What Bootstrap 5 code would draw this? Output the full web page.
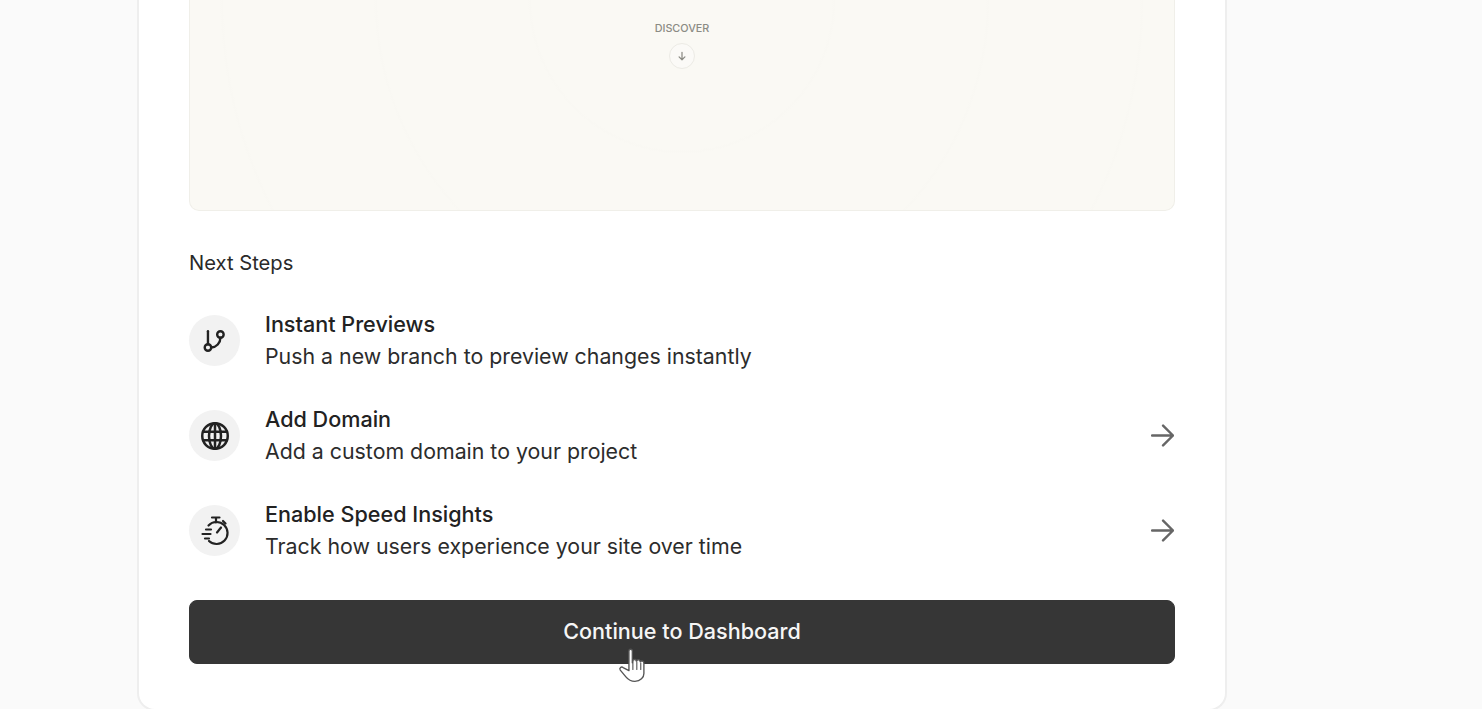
<!DOCTYPE html>
<html lang="en">
<head>
<meta charset="utf-8">
<title>Next Steps</title>
<link href="https://cdn.jsdelivr.net/npm/bootstrap@5.3.0/dist/css/bootstrap.min.css" rel="stylesheet">
<style>
html,body{height:709px;overflow:hidden}
body{background:#fafafa;font-family:Inter,"Liberation Sans",sans-serif;color:#222}
.sheet{width:1090px;height:711px;margin-left:137px;border:2px solid #eeeeee;border-top:0;border-radius:0 0 18px 18px;padding:0 50px 47px;background:#fff}
.preview{height:211px;padding-top:20px;background:repeating-radial-gradient(circle at 50% 0,#faf9f4 0,#faf9f4 150px,#f9f8f3 152px,#faf9f4 154px);border:1px solid #f0efe9;border-top:0;border-radius:0 0 10px 10px}
.disc-label{font-size:10.8px;line-height:17px;font-weight:500;color:#8b8b84}
.disc-btn{width:26px;height:26px;margin-top:6px;border:1px solid #ecebe5;background:#fbfaf7}
.steps-head{font-size:20.2px;line-height:32px;margin-top:36px;margin-bottom:30px;color:#2a2a2a}
.step-list{gap:31px}
.step{height:64px}
.step-icon{width:51px;height:51px;background:#f2f2f2;margin-right:25px;flex:none;color:#222;margin-top:-1px}
.step-text{margin-top:-2px}
.step-title{font-size:21.6px;line-height:32px;font-weight:500;color:#222}
.step-desc{font-size:21.33px;line-height:32px;color:#2c2c2c}
.step-arrow{margin-right:1.5px;flex:none;margin-top:-1px}
.cta{height:64px;margin-top:37px;padding-bottom:7px;font-size:21.6px;font-weight:500;background:#363636;border:1px solid #363636;border-radius:8px;color:#f6f6f6;font-family:inherit}
.cta-wrap{position:relative}
.hand{position:absolute;left:428px;top:47px;pointer-events:none}
</style>
</head>
<body>
<main class="sheet">
  <section class="preview d-flex flex-column align-items-center">
    <div class="disc-label">DISCOVER</div>
    <div class="disc-btn rounded-circle d-flex align-items-center justify-content-center">
      <svg width="10" height="10" viewBox="0 0 24 24" fill="none" stroke="#8b8b84" stroke-width="3" stroke-linecap="round" stroke-linejoin="round"><path d="M12 3v18M5 14l7 7 7-7"/></svg>
    </div>
  </section>

  <h2 class="steps-head fw-normal">Next Steps</h2>

  <div class="step-list d-flex flex-column">
    <div class="step d-flex align-items-center">
      <div class="step-icon rounded-circle d-flex align-items-center justify-content-center">
        <svg width="26" height="26" viewBox="0 0 24 24" fill="none" stroke="currentColor" stroke-width="2.200" stroke-linecap="round" stroke-linejoin="round"><path d="M5.500 3v12"/><circle cx="17" cy="6" r="3"/><circle cx="5.500" cy="18" r="3"/><path d="M17 9a9 9 0 0 1-8.500 9"/></svg>
      </div>
      <div class="step-text flex-grow-1">
        <div class="step-title">Instant Previews</div>
        <div class="step-desc">Push a new branch to preview changes instantly</div>
      </div>
    </div>
    <div class="step d-flex align-items-center">
      <div class="step-icon rounded-circle d-flex align-items-center justify-content-center">
        <svg width="30" height="30" viewBox="0 0 24 24" fill="none" stroke="currentColor" stroke-width="2" stroke-linecap="round" stroke-linejoin="round"><circle cx="12" cy="12" r="10.200"/><path d="M2.600 8.600h18.800M2.600 15.400h18.800M12 2v20"/><ellipse cx="12" cy="12" rx="4.800" ry="10.200"/></svg>
      </div>
      <div class="step-text flex-grow-1">
        <div class="step-title">Add Domain</div>
        <div class="step-desc">Add a custom domain to your project</div>
      </div>
      <svg class="step-arrow" width="23" height="23" viewBox="4 4 16 16" fill="none" stroke="#666" stroke-width="1.700" stroke-linecap="round" stroke-linejoin="round"><path d="M4.700 12h14.600M12.400 5.100l6.900 6.900-6.900 6.900"/></svg>
    </div>
    <div class="step d-flex align-items-center">
      <div class="step-icon rounded-circle d-flex align-items-center justify-content-center">
        <svg width="32" height="32" viewBox="0 0 32 32" fill="none" stroke="currentColor" stroke-width="2.200" stroke-linecap="round" stroke-linejoin="round"><path d="M13 2.500h7.500M17 3v4.500"/><path d="M9.500 10.500A11 11 0 1 1 10 26"/><path d="M18 17.500l4-5"/><path d="M7 14.500h5M3.500 19h8M6 23.500h4"/><path d="M24 6l2.500 2.500"/></svg>
      </div>
      <div class="step-text flex-grow-1">
        <div class="step-title">Enable Speed Insights</div>
        <div class="step-desc">Track how users experience your site over time</div>
      </div>
      <svg class="step-arrow" width="23" height="23" viewBox="4 4 16 16" fill="none" stroke="#666" stroke-width="1.700" stroke-linecap="round" stroke-linejoin="round"><path d="M4.700 12h14.600M12.400 5.100l6.900 6.900-6.900 6.900"/></svg>
    </div>
  </div>

  <div class="cta-wrap">
    <button type="button" class="btn cta w-100 d-flex align-items-center justify-content-center">Continue to Dashboard</button>
    <svg class="hand" width="34" height="36" viewBox="2 0 27 32"><path d="M11 3.500c0-2 3-2 3 0V14l.5-2c1-1.500 3-1 3 .5l.5-.5c1-1.200 3-.7 3 1l.3-.2c1.200-.8 3-.2 3 1.700v9c0 3.500-3 7-8 7-4 0-6-1.500-8-4l-5-6c-1.200-1.800 1-3.500 2.500-2.200L11 21z" fill="#fff" stroke="#555" stroke-width="1.200" stroke-linejoin="round"/><path d="M14.500 13v7M18 13v7M21.500 14v6" stroke="#555" stroke-width="1" fill="none" stroke-linecap="round"/></svg>
  </div>
</main>
<script src="https://cdn.jsdelivr.net/npm/bootstrap@5.3.0/dist/js/bootstrap.bundle.min.js"></script>
</body>
</html>
